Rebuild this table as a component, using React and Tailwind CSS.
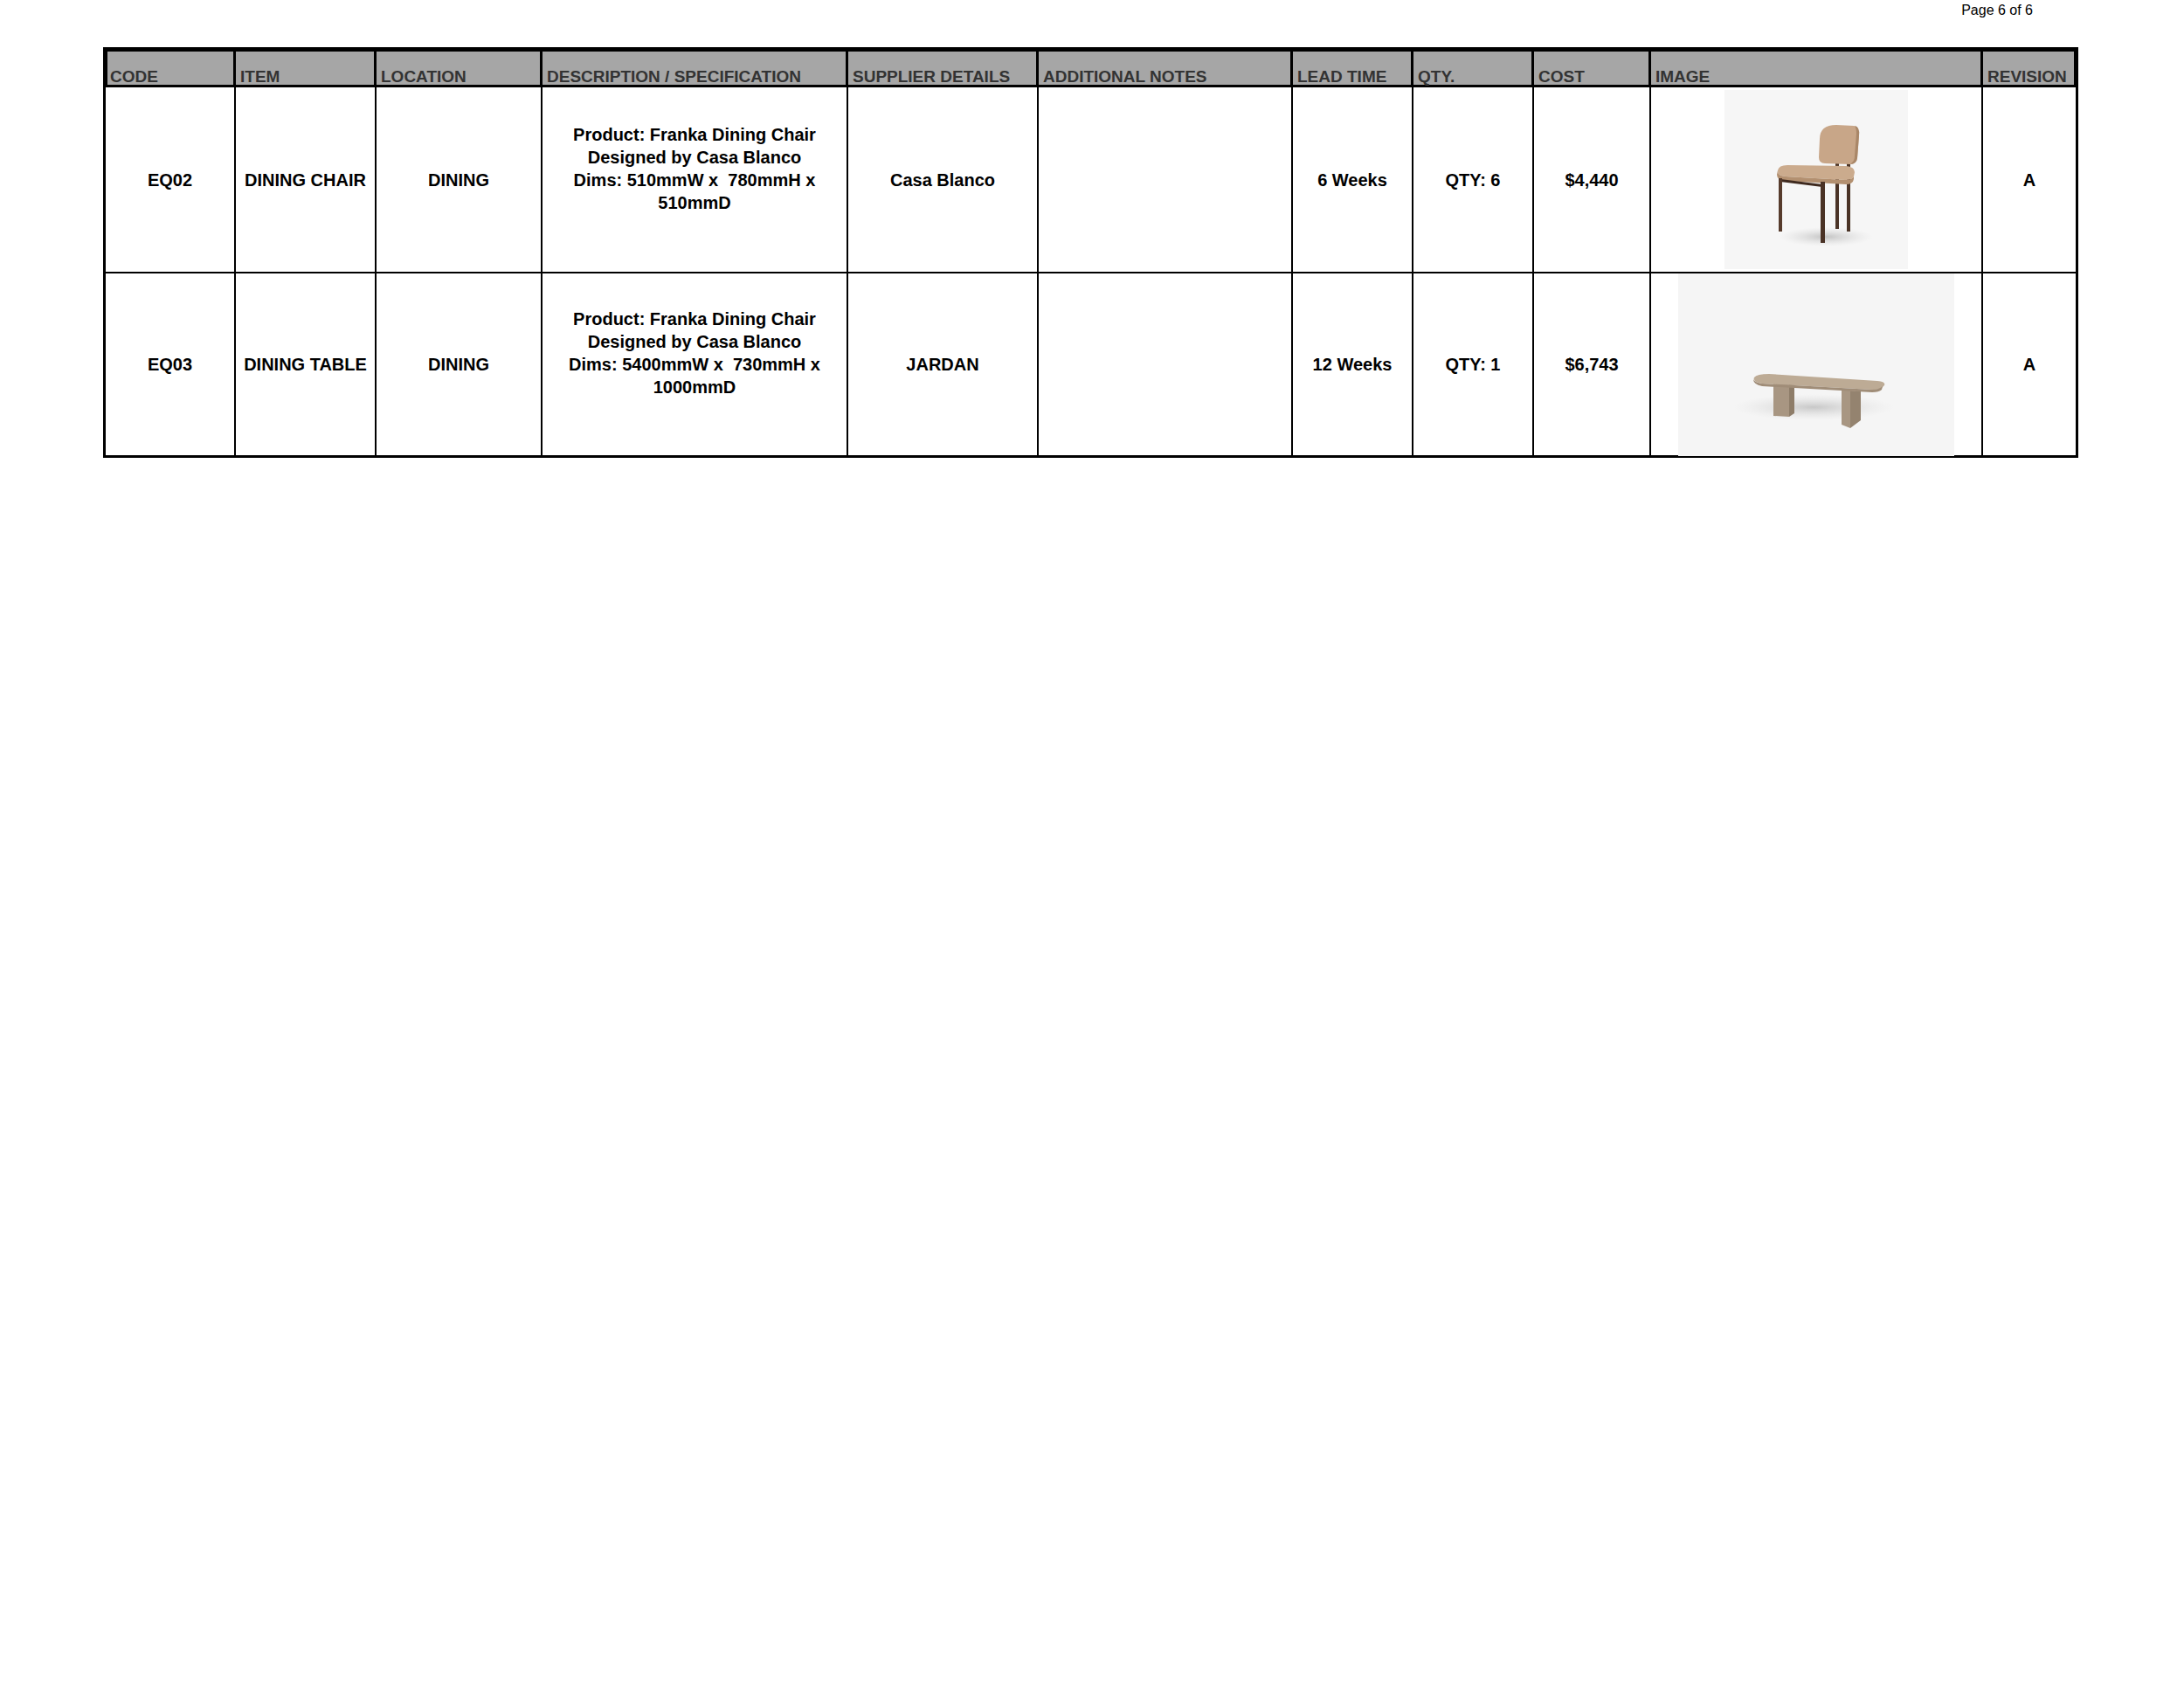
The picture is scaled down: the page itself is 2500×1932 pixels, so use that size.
import React from 'react'

const GRID =
  'grid grid-cols-[152px_161px_190px_350px_218px_291px_138px_138px_134px_380px_109px]'

const HEADERS = [
  'CODE',
  'ITEM',
  'LOCATION',
  'DESCRIPTION / SPECIFICATION',
  'SUPPLIER DETAILS',
  'ADDITIONAL NOTES',
  'LEAD TIME',
  'QTY.',
  'COST',
  'IMAGE',
  'REVISION',
]

const ROWS = [
  {
    code: 'EQ02',
    item: 'DINING CHAIR',
    location: 'DINING',
    spec: ['Product: Franka Dining Chair', 'Designed by Casa Blanco', 'Dims: 510mmW x  780mmH x', '510mmD'],
    supplier: 'Casa Blanco',
    notes: '',
    lead: '6 Weeks',
    qty: 'QTY: 6',
    cost: '$4,440',
    image: 'chair',
    revision: 'A',
  },
  {
    code: 'EQ03',
    item: 'DINING TABLE',
    location: 'DINING',
    spec: ['Product: Franka Dining Chair', 'Designed by Casa Blanco', 'Dims: 5400mmW x  730mmH x', '1000mmD'],
    supplier: 'JARDAN',
    notes: '',
    lead: '12 Weeks',
    qty: 'QTY: 1',
    cost: '$6,743',
    image: 'table',
    revision: 'A',
  },
]

function ChairPicture() {
  return (
    <svg viewBox="0 0 210 205" className="block h-[205px] w-[210px]">
      <defs>
        <radialGradient id="chairShadow" cx="50%" cy="50%" r="50%">
          <stop offset="0%" stopColor="#8f8f8f" stopOpacity="0.5" />
          <stop offset="100%" stopColor="#c8c8c8" stopOpacity="0" />
        </radialGradient>
      </defs>
      <rect width="210" height="205" fill="#f6f6f6" />
      <ellipse cx="116" cy="168" rx="54" ry="11" fill="url(#chairShadow)" />
      {/* back legs */}
      <rect x="127" y="76" width="4" height="83" fill="#4a3326" />
      <rect x="140" y="76" width="4" height="86" fill="#4a3326" />
      {/* backrest */}
      <path
        d="M109 56 Q109 40 128 40 L148 41 Q155 42 154 52 L152 78 Q151 85 144 85 L115 84 Q108 84 108 77 Z"
        fill="#c8a688"
      />
      <path d="M149 41 Q155 42 154 52 L152 78 Q151 85 144 85 L146 83 Q149 81 149 75 L151 50 Q151 44 149 41 Z" fill="#a98768" />
      {/* seat */}
      <path
        d="M61 92 Q62 86 72 86 L139 87 Q149 88 149 94 L148 99 Q146 103 138 103 L70 99 Q60 98 61 92 Z"
        fill="#cbab8d"
      />
      <path
        d="M61 92 Q60 98 70 99 L138 103 Q146 103 148 99 L148 102 Q147 108 139 108 L70 104 Q60 103 60 97 Z"
        fill="#b39070"
      />
      {/* rail */}
      <path d="M64 102 L112 108 L112 111 L64 105 Z" fill="#3f2a1f" />
      {/* front legs */}
      <rect x="62" y="101" width="4" height="61" fill="#563b2c" />
      <rect x="110" y="105" width="5" height="70" fill="#4a3225" />
    </svg>
  )
}

function TablePicture() {
  return (
    <svg viewBox="0 0 316 209" className="block h-[209px] w-[316px]">
      <defs>
        <radialGradient id="tableShadow" cx="50%" cy="50%" r="50%">
          <stop offset="0%" stopColor="#9a9a9a" stopOpacity="0.5" />
          <stop offset="100%" stopColor="#cfcfcf" stopOpacity="0" />
        </radialGradient>
      </defs>
      <rect width="316" height="209" fill="#f5f5f5" />
      <ellipse cx="155" cy="153" rx="92" ry="15" fill="url(#tableShadow)" />
      {/* legs */}
      <path d="M109 126 L127 127 L127 164 L109 163 Z" fill="#a89682" />
      <path d="M127 127 L133 127 L133 160 L127 164 Z" fill="#8e7d69" />
      <path d="M187 133 L197 134 L197 177 L187 173 Z" fill="#a89682" />
      <path d="M197 134 L209 135 L209 168 L197 177 Z" fill="#94836f" />
      {/* top */}
      <path
        d="M87 119 Q90 115 104 115 L228 123 Q238 124 236 128 L233 131 Q230 133 222 133 L96 126 Q85 124 87 119 Z"
        fill="#bdab95"
      />
      <path
        d="M86 121 Q88 125 96 126 L222 133 Q230 133 234 129 L233 133 Q230 136 222 136 L96 129 Q86 127 86 121 Z"
        fill="#a08d78"
      />
    </svg>
  )
}

function HeadCell({ children, first, last }) {
  const edge = first ? 'border-l-[5px] pl-[3px]' : last ? 'border-r-[5px] pl-[5px]' : 'pl-[5px]'
  return (
    <div
      className={`flex h-[46px] items-end border-t-[5px] border-r-[3px] border-b-[3px] border-black bg-[#a6a6a6] text-[19px] leading-[19px] font-bold whitespace-nowrap text-[#333333] ${edge}`}
    >
      {children}
    </div>
  )
}

function Cell({ children, first, last, lastRow, extra = '' }) {
  const side = first ? 'border-l-[3px]' : ''
  const right = last ? 'border-r-[3px]' : 'border-r-2'
  const bottom = lastRow ? 'h-[211px] border-b-[3px]' : 'h-[213px] border-b-2'
  return (
    <div
      className={`flex items-center justify-center border-black text-center text-[20px] leading-[26px] font-bold text-black ${side} ${right} ${bottom} ${extra}`}
    >
      {children}
    </div>
  )
}

export default function App() {
  return (
    <div className="min-h-screen bg-white font-['Liberation_Sans',Arial,sans-serif]">
      <div className="ml-[118px] w-[2261px]">
        <div className="flex justify-end pt-[3px] pr-[52px] text-[16px] leading-[18px] text-black">Page 6 of 6</div>

        <div className="mt-[33px]">
          <div className={GRID}>
            {HEADERS.map((h, i) => (
              <HeadCell key={h} first={i === 0} last={i === HEADERS.length - 1}>
                {h}
              </HeadCell>
            ))}
          </div>

          {ROWS.map((r, ri) => {
            const lastRow = ri === ROWS.length - 1
            return (
              <div key={r.code} className={GRID}>
                <Cell first lastRow={lastRow}>{r.code}</Cell>
                <Cell lastRow={lastRow}>{r.item}</Cell>
                <Cell lastRow={lastRow}>{r.location}</Cell>
                <Cell lastRow={lastRow} extra="pb-[26px]">
                  <div>
                    {r.spec.map((line) => (
                      <div key={line} className="whitespace-pre">
                        {line}
                      </div>
                    ))}
                  </div>
                </Cell>
                <Cell lastRow={lastRow}>{r.supplier}</Cell>
                <Cell lastRow={lastRow}>{r.notes}</Cell>
                <Cell lastRow={lastRow}>{r.lead}</Cell>
                <Cell lastRow={lastRow}>{r.qty}</Cell>
                <Cell lastRow={lastRow}>{r.cost}</Cell>
                <Cell lastRow={lastRow}>{r.image === 'chair' ? <ChairPicture /> : <TablePicture />}</Cell>
                <Cell last lastRow={lastRow}>{r.revision}</Cell>
              </div>
            )
          })}
        </div>
      </div>
    </div>
  )
}
